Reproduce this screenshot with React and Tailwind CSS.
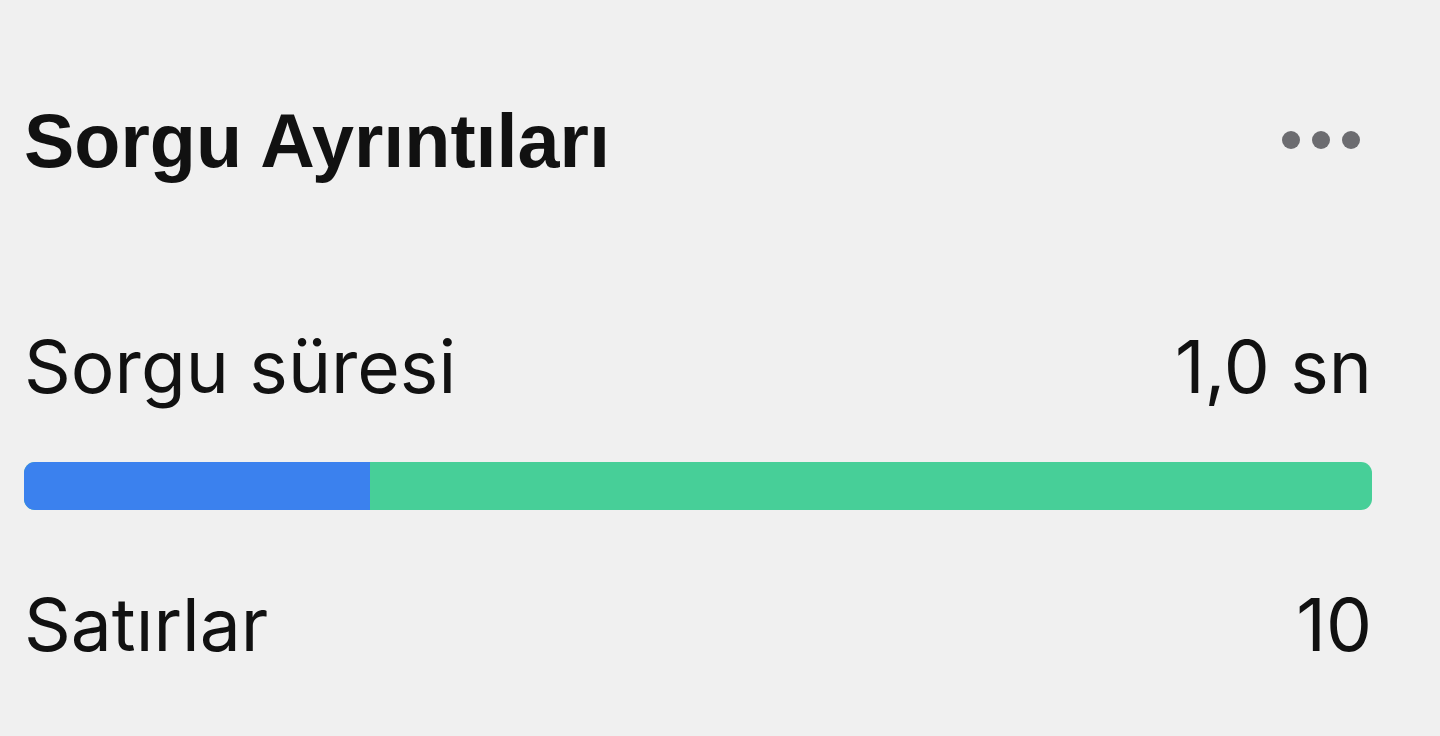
import React from "react";

export default function App() {
    const pct = 25.7;

    return (
        <div className="min-h-screen w-full bg-[#f0f0f0] text-[#111111] font-['Inter','Liberation_Sans',sans-serif]">
            <div className="pl-[24px] pr-[68px] pt-[94px]">
                {/* başlık */}
                <div className="flex items-center justify-between h-[96px]">
                    <h1 className="text-[75.5px] leading-none font-bold font-['Liberation_Sans','Inter',sans-serif]">
                        Sorgu Ayrıntıları
                    </h1>
                    <div className="flex items-center gap-[12px] pr-[12px] -mt-[4px]">
                        <span className="w-[18px] h-[18px] rounded-full bg-[#6c6c70]" />
                        <span className="w-[18px] h-[18px] rounded-full bg-[#6c6c70]" />
                        <span className="w-[18px] h-[18px] rounded-full bg-[#6c6c70]" />
                    </div>
                </div>

                <div className="mt-[140px] flex items-center justify-between text-[73px] leading-none">
                    <span>Sorgu süresi</span>
                    <span>1,0 sn</span>
                </div>

                <div className="mt-[59px] h-[48px] w-full rounded-[11px] overflow-hidden flex bg-[#47cf98]">
                    <div className="h-full bg-[#3b81ee]" style={{ width: `${pct}%` }} />
                </div>

                <div className="mt-[78px] flex items-center justify-between text-[73px] leading-none">
                    <span>Satırlar</span>
                    <span>10</span>
                </div>
            </div>
        </div>
    );
}
